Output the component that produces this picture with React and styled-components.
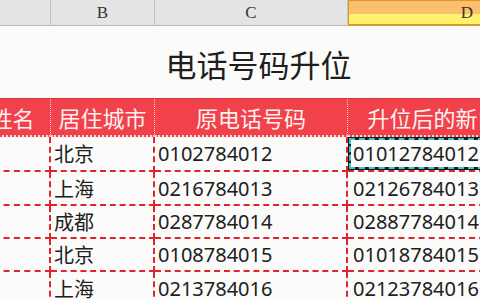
import styled, { createGlobalStyle, css } from "styled-components";

const GlobalStyle = createGlobalStyle`
  html, body {
    margin: 0;
    padding: 0;
    width: 480px;
    height: 300px;
    overflow: hidden;
    background: #fbfbf9;
  }
`;

const RED = "#e0232e";

const Sheet = styled.div`
  display: grid;
  grid-template-columns: 120px 104px 193px 238px;
  grid-template-rows: 26px 72px 39px 35px 34px 33px 33px 34px;
  margin-left: -69px;
  width: 655px;
  font-family: "Noto Sans", "Noto Sans CJK SC", sans-serif;
`;

const ColHead = styled.div`
  box-sizing: border-box;
  display: flex;
  align-items: center;
  justify-content: center;
  font-family: "Liberation Serif", "DejaVu Serif", serif;
  font-size: 17px;
  color: #333;
  background: #e4e4e4;
  border-right: 1px solid #c4c4c4;
  border-bottom: 1px solid #b8b8b8;
  ${(p) =>
    p.$active &&
    css`
      background: linear-gradient(#fbbf6e 0, #fbbf6e 13px, #fff36e 13px);
      border: 1px solid #d9982c;
      border-bottom: 2px solid #d9982c;
    `}
`;

const Title = styled.div`
  grid-column: 1 / -1;
  display: flex;
  align-items: center;
  justify-content: center;
  font-size: 31px;
  color: #1e1e1e;
  padding-top: 2px;
`;

const HeadCell = styled.div`
  box-sizing: border-box;
  display: flex;
  align-items: center;
  justify-content: center;
  white-space: nowrap;
  background: #f1424b;
  color: #fdf0f0;
  font-size: 22px;
  border-top: 1px solid #d8343c;
  border-right: 1px dotted #ffd0d0;
  border-bottom: 2px dotted #f6d8d8;
  overflow: hidden;
`;

const Cell = styled.div`
  box-sizing: border-box;
  position: relative;
  display: flex;
  align-items: center;
  padding-left: ${(p) => (p.$wide ? "5px" : "3px")};
  white-space: nowrap;
  overflow: hidden;
  font-size: 20px;
  color: #202020;
  border-right: 2px dashed ${RED};
  border-bottom: 2px dashed ${RED};
  ${(p) =>
    p.$selected &&
    css`
      box-shadow: inset 0 0 0 3px #1b1b1b;
      &::after {
        content: "";
        position: absolute;
        inset: 1px;
        border: 2px dashed #36c9c9;
      }
    `}
`;

const rows = [
  ["北京", "0102784012", "01012784012"],
  ["上海", "0216784013", "02126784013"],
  ["成都", "0287784014", "02887784014"],
  ["北京", "0108784015", "01018784015"],
  ["上海", "0213784016", "02123784016"],
];

export default function App() {
  return (
    <>
      <GlobalStyle />
      <Sheet>
        <ColHead>A</ColHead>
        <ColHead>B</ColHead>
        <ColHead>C</ColHead>
        <ColHead $active>D</ColHead>

        <Title>电话号码升位</Title>

        <HeadCell>客户姓名</HeadCell>
        <HeadCell>居住城市</HeadCell>
        <HeadCell>原电话号码</HeadCell>
        <HeadCell>升位后的新电话号码</HeadCell>

        {rows.map(([city, oldNum, newNum], i) => [
          <Cell key={`a${i}`} />,
          <Cell key={`b${i}`}>{city}</Cell>,
          <Cell key={`c${i}`}>{oldNum}</Cell>,
          <Cell key={`d${i}`} $wide $selected={i === 0}>
            {newNum}
          </Cell>,
        ])}
      </Sheet>
    </>
  );
}
